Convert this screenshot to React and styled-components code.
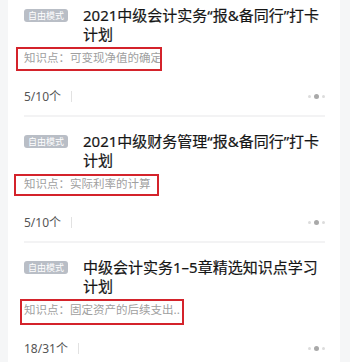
import React from 'react'
import styled, { createGlobalStyle } from 'styled-components';

const plans = [
  {
    title: '2021中级会计实务“报&备同行”打卡计划',
    point: '知识点：可变现净值的确定',
    count: '5/10个',
    mark: { left: -8, top: -2, width: 146, height: 24 },
  },
  {
    title: '2021中级财务管理“报&备同行”打卡计划',
    point: '知识点：实际利率的计算',
    count: '5/10个',
    mark: { left: -10, top: -1, width: 145, height: 22 },
  },
  {
    title: '中级会计实务1–5章精选知识点学习计划',
    point: '知识点：固定资产的后续支出..',
    count: '18/31个',
    mark: { left: -4, top: -2, width: 164, height: 26 },
  },
];

const Plans = () => {
  return (
    <>
      <GlobalStyle />
      <Page>
        <List>
          {plans.map((p, i) => (
            <Card key={i}>
              <Header>
                <Badge>自由模式</Badge>
                <Title>{p.title}</Title>
              </Header>
              <Point>
                {p.point}
                <Mark
                  style={{
                    left: p.mark.left,
                    top: p.mark.top,
                    width: p.mark.width,
                    height: p.mark.height,
                  }}
                />
              </Point>
              <Footer>
                <Count>{p.count}</Count>
                <Divider />
                <Dots>
                  <Dot />
                  <Dot $active />
                  <Dot />
                </Dots>
              </Footer>
            </Card>
          ))}
        </List>
      </Page>
    </>
  )
}

const GlobalStyle = createGlobalStyle`
  html, body {
    margin: 0;
    padding: 0;
    background: #f5f6f7;
  }
  body {
    font-family: "Noto Sans", "Noto Sans CJK SC", sans-serif;
  }
`;

const Page = styled.div`
  width: 350px;
  height: 362px;
  overflow: hidden;
  background: #f5f6f7;
  padding: 0 10px 0 8px;
  box-sizing: border-box;
`;

const List = styled.div`
  background: #fff;
  margin-top: -9px;
  padding-bottom: 40px;
`;

const Card = styled.div`
  margin: 0 15px 0 16px;
  padding-top: 15px;
  border-bottom: 2px solid #f3f3f4;
`;

const Header = styled.div`
  display: flex;
  align-items: flex-start;
`;

const Badge = styled.span`
  flex: none;
  margin-top: 3px;
  height: 13px;
  line-height: 13px;
  padding: 0 4px;
  border-radius: 3px;
  background: #b9bec6;
  color: #fff;
  font-family: "Noto Sans CJK SC", sans-serif;
  font-size: 9px;
  margin-right: 15px;
`;

const Title = styled.div`
  font-size: 15px;
  line-height: 19px;
  color: #161616;
  font-weight: 400;
  -webkit-text-stroke: 0.2px #161616;
`;

const Point = styled.div`
  position: relative;
  display: inline-block;
  margin-top: 5px;
  font-family: "Noto Sans CJK SC", sans-serif;
  font-size: 11.5px;
  line-height: 17px;
  color: #a0a0a0;
  white-space: nowrap;
`;

const Mark = styled.span`
  position: absolute;
  border: 2px solid #d4232b;
  box-sizing: border-box;
  pointer-events: none;
`;

const Footer = styled.div`
  display: flex;
  align-items: center;
  height: 20px;
  margin-top: 19px;
  padding-bottom: 9px;
`;

const Count = styled.span`
  font-size: 12px;
  color: #555;
`;

const Divider = styled.span`
  width: 1px;
  height: 11px;
  background: #e2e2e2;
  margin-left: 10px;
`;

const Dots = styled.div`
  margin-left: auto;
  display: flex;
  align-items: center;
  gap: 3px;
`;

const Dot = styled.span`
  width: ${p => (p.$active ? '5px' : '3px')};
  height: ${p => (p.$active ? '5px' : '3px')};
  border-radius: 50%;
  background: ${p => (p.$active ? '#a9a9a9' : '#dcdcdc')};
`;

export default Plans
